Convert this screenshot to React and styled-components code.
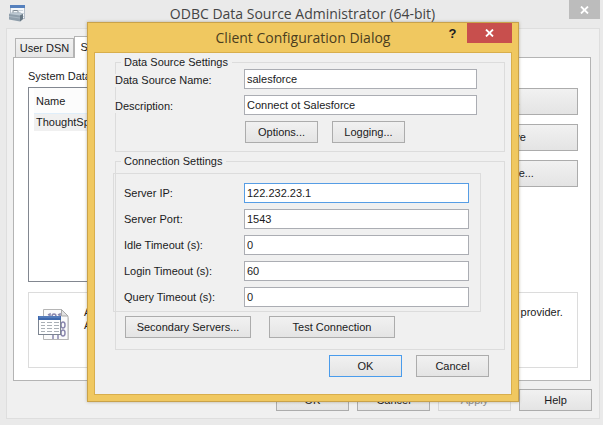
import React from 'react';
import styled, { createGlobalStyle } from 'styled-components';

const GlobalStyle = createGlobalStyle`
  *, *::before, *::after { box-sizing: border-box; }
  body { margin: 0; background: #eaeaea; }
  body, button, input, table {
    font: 11px/13px "Liberation Sans", Arial, sans-serif;
    color: #1a1a22;
  }
`;

const Desktop = styled.div`
  position: relative;
  min-height: 100vh;
  background: #eaeaea;
  overflow: hidden;
`;

const AdminWindow = styled.main`
  padding: 0 3px 6px 6px;
`;

const AdminTitleBar = styled.header`
  display: grid;
  grid-template-columns: 32px 1fr 32px;
  align-items: start;
  height: 28px;
  padding-left: 3px;

  > svg { margin-top: 5px; }
`;

const Title = styled.h1`
  margin: 0;
  font: 400 14px/20px "Open Sans", "Noto Sans", sans-serif;
  color: ${(p) => (p.$active ? '#4a3d1e' : '#444')};
  text-align: center;
  white-space: nowrap;
`;

const AdminTitle = styled(Title)`
  padding: 4px 4px 0 0;
`;

const CloseButton = styled.button`
  display: flex;
  align-items: center;
  justify-content: center;
  width: ${(p) => (p.$active ? 45 : 31)}px;
  height: ${(p) => (p.$active ? 20 : 19)}px;
  padding: 0;
  border: 0;
  background: ${(p) => (p.$active ? '#c84f4d' : '#bcbcbc')};
  justify-self: end;
`;

const AdminBody = styled.div`
  padding: 7px 8px 7px 6px;
  border: 1px solid #dedede;
  background: #f0f0f0;
`;

const Tabs = styled.div`
  display: flex;
  align-items: flex-end;
  padding-left: 2px;
  height: 21px;
`;

const Tab = styled.button`
  width: ${(p) => (p.$selected ? 76 : 59)}px;
  height: ${(p) => (p.$selected ? 22 : 19)}px;
  margin-bottom: ${(p) => (p.$selected ? -1 : 0)}px;
  padding: 0;
  border: 1px solid #b4b4b4;
  border-bottom: 0;
  background: ${(p) => (p.$selected ? '#fff' : 'linear-gradient(#f1f1f1, #e6e6e6)')};
  white-space: nowrap;
`;

const TabPanel = styled.section`
  padding: 12px 12px 12px 14px;
  border: 1px solid #b4b4b4;
  background: #fff;
`;

const PanelLabel = styled.h2`
  margin: 0 0 4px;
  font: inherit;
`;

const SourceArea = styled.div`
  display: grid;
  grid-template-columns: 1fr 145px;
  gap: 8px;
`;

const SourceList = styled.div`
  height: 195px;
  padding: 0 5px;
  border: 1px solid #828790;
`;

const SourceTable = styled.table`
  width: 100%;
  border-collapse: collapse;

  th, td { padding: 0 2px; font-weight: 400; text-align: left; }
  th { height: 25px; padding-top: 3px; background: #fcfcfc; border-bottom: 1px solid #dfeefa; }
  td { height: 18px; background: #f0f0f0; }
`;

const SourceActions = styled.div`
  display: flex;
  flex-direction: column;
  gap: 9px;
  padding-top: 1px;
`;

const Button = styled.button`
  height: ${(p) => (p.$tall ? 27 : 22)}px;
  width: ${(p) => p.$width || '73px'};
  padding: 0;
  border: 1px solid ${(p) => (p.$default ? '#4a9cec' : '#acacac')};
  background: linear-gradient(#f1f1f1, #e4e4e4);
  white-space: nowrap;

  &:disabled { border-color: #d6d6d6; background: #efefef; color: #8c8c8c; }
`;

const InfoBox = styled.div`
  display: flex;
  gap: 14px;
  height: 76px;
  margin-top: 10px;
  padding: 13px 9px;
  border: 1px solid #dcdcdc;

  svg { flex: none; margin-top: 3px; }
  p { margin: 0; white-space: nowrap; }
`;

const AdminFooter = styled.footer`
  display: flex;
  justify-content: flex-end;
  gap: 8px;
  margin-top: 8px;
  margin-right: -1px;
`;

const Dialog = styled.section`
  position: absolute;
  top: 22px;
  left: 87px;
  right: 84px;
  padding: 0 6px 6px;
  border: 1px solid #c9a24a;
  background: #f0c860;
  box-shadow: 0 0 3px rgba(80, 60, 10, 0.35);
`;

const DialogTitleBar = styled.header`
  display: grid;
  grid-template-columns: 74px 1fr 29px 45px;
  align-items: start;
  height: 29px;
`;

const DialogTitle = styled(Title)`
  padding-top: 5px;
`;

const HelpButton = styled.button`
  height: 20px;
  padding: 0;
  border: 0;
  background: none;
  font-size: 13px;
  font-weight: 700;
`;

const DialogForm = styled.form`
  padding: 3px 6px 17px 20px;
  border: 1px solid #d8ae4c;
  background: #f0f0f0;
`;

const Group = styled.fieldset`
  min-width: 0;
  margin: 0 0 3px;
  padding: 0 0 ${(p) => p.$bottom}px;
  border: 1px solid #dcdcdc;
`;

const Legend = styled.legend`
  margin-left: 5px;
  padding: 0 4px 0 3px;
`;

const Fields = styled.div`
  display: flex;
  flex-direction: column;
  gap: 6px;
  padding-right: 27px;
`;

const InsetFields = styled(Fields)`
  margin: 5px 23px 0 -3px;
  padding: 9px 11px 4px 10px;
  border: 1px solid #dcdcdc;
`;

const FieldRow = styled.div`
  display: grid;
  grid-template-columns: ${(p) => (p.$inset ? 120 : 128)}px 1fr;
  align-items: center;
`;

const FieldLabel = styled.label`
  white-space: nowrap;
`;

const EdgeLabel = styled(FieldLabel)`
  margin: 2px 0 0 -1px;
  background: #f0f0f0;
`;

const TextBox = styled.input`
  width: 100%;
  min-width: 0;
  height: 20px;
  padding: 0 2px;
  border: 1px solid ${(p) => (p.$focused ? '#569de5' : '#abadb3')};
  border-radius: 0;
  background: #fff;
  outline: none;
`;

const ButtonRow = styled.div`
  display: flex;
  gap: ${(p) => p.$gap}px;
  padding-left: ${(p) => p.$indent}px;
  margin-top: ${(p) => p.$top}px;
`;

const DialogFooter = styled.footer`
  display: flex;
  justify-content: flex-end;
  gap: 14px;
  padding: 2px 16px 0 0;
`;

function Cross() {
  return (
    <svg width="9" height="8" viewBox="0 0 9 8" aria-hidden="true">
      <path d="M1 .5 8 7.500M8 .5 1 7.500" stroke="#fff" strokeWidth="1.8" fill="none" />
    </svg>
  );
}

function ToolboxIcon() {
  return (
    <svg width="17" height="17" viewBox="0 0 17 17" aria-hidden="true">
      <rect x="1.500" y=".5" width="14" height="13" fill="#f4f7fa" stroke="#b4bdc8" />
      <rect x="1" y="0" width="15" height="3" fill="#5580bd" />
      <path d="M3 5.500h11M12 8.500h3M13 11.500h2" stroke="#cdd5dd" />
      <path d="M4 8V6.500Q4 5.500 5 5.500h3q1 0 1 1V8" fill="none" stroke="#7c8790" />
      <path d="M0 9 3 7.500h8l3 1.500v5l-3 2.500L0 14.500z" fill="#8f9eab" />
      <path d="M0 9 3 7.500h8l3 1.500-3 1.500z" fill="#bac6d0" />
      <path d="M11 10.500 14 9v5l-3 2.500z" fill="#687885" />
      <path d="M0 11.500 11 13" fill="none" stroke="#a9b6c1" />
    </svg>
  );
}

function DataSourceIcon() {
  return (
    <svg width="32" height="32" viewBox="0 0 32 32" aria-hidden="true">
      <path d="M7 2h17l7 7v22H7z" fill="#d0d0d0" />
      <path d="M5.500.5h18l6.500 6.500v23.500H5.500z" fill="#fbfbfb" stroke="#b5b5b5" />
      <path d="M23.500.5V7H30z" fill="#e2e2e2" stroke="#a9a9a9" />
      <g fill="none" stroke="#8b88ae" strokeWidth="1.5">
        <path d="M10 6l2-1v5M20 6l2-1v5M13 25l2-1v6M18 25l2-1v6" />
        <ellipse cx="16" cy="7.500" rx="2" ry="2.500" />
        <ellipse cx="25" cy="16" rx="2" ry="3" />
        <ellipse cx="25" cy="24" rx="2" ry="3" />
      </g>
      <rect x=".5" y="7.500" width="22" height="18" fill="#fff" stroke="#7d8591" />
      <rect x="0" y="7" width="23" height="4" fill="#3e68ad" />
      <path d="M1 8h21" stroke="#6d91ca" />
      <path d="M3 13.500h4M9 13.500h5M16 13.500h5M3 16.500h4M9 16.500h5M16 16.500h5M3 19.500h4M9 19.500h5M16 19.500h5M3 22.500h4M9 22.500h5M16 22.500h5" stroke="#aab0b6" />
    </svg>
  );
}

const connectionFields = [
  { id: 'server-ip', label: 'Server IP:', value: '122.232.23.1', focused: true },
  { id: 'server-port', label: 'Server Port:', value: '1543' },
  { id: 'idle-timeout', label: 'Idle Timeout (s):', value: '0' },
  { id: 'login-timeout', label: 'Login Timeout (s):', value: '60' },
  { id: 'query-timeout', label: 'Query Timeout (s):', value: '0' },
];

function Administrator() {
  return (
    <AdminWindow>
      <AdminTitleBar>
        <ToolboxIcon />
        <AdminTitle>ODBC Data Source Administrator (64-bit)</AdminTitle>
        <CloseButton type="button" aria-label="Close administrator"><Cross /></CloseButton>
      </AdminTitleBar>
      <AdminBody>
        <Tabs role="tablist">
          <Tab type="button" role="tab" aria-selected="false">User DSN</Tab>
          <Tab type="button" role="tab" aria-selected="true" $selected>System DSN</Tab>
        </Tabs>
        <TabPanel role="tabpanel">
          <PanelLabel>System Data Sources:</PanelLabel>
          <SourceArea>
            <SourceList>
              <SourceTable>
                <thead><tr><th>Name</th></tr></thead>
                <tbody><tr><td>ThoughtSpot</td></tr></tbody>
              </SourceTable>
            </SourceList>
            <SourceActions>
              <Button type="button" $tall $width="100%">Add...</Button>
              <Button type="button" $tall $width="100%">Remove</Button>
              <Button type="button" $tall $width="100%">Configure...</Button>
            </SourceActions>
          </SourceArea>
          <InfoBox>
            <DataSourceIcon />
            <p>
              An ODBC System data source stores information on how to connect to the indicated data provider.
              <br />
              A System data source is visible to all users.
            </p>
          </InfoBox>
        </TabPanel>
        <AdminFooter>
          <Button type="button">OK</Button>
          <Button type="button">Cancel</Button>
          <Button type="button" disabled>Apply</Button>
          <Button type="button">Help</Button>
        </AdminFooter>
      </AdminBody>
    </AdminWindow>
  );
}

function ClientDialog() {
  return (
    <Dialog role="dialog" aria-labelledby="dialog-title">
      <DialogTitleBar>
        <span />
        <DialogTitle as="h2" id="dialog-title" $active>Client Configuration Dialog</DialogTitle>
        <HelpButton type="button" aria-label="Help">?</HelpButton>
        <CloseButton type="button" aria-label="Close dialog" $active><Cross /></CloseButton>
      </DialogTitleBar>
      <DialogForm onSubmit={(e) => e.preventDefault()}>
        <Group $bottom={8}>
          <Legend>Data Source Settings</Legend>
          <Fields>
            <FieldRow>
              <EdgeLabel htmlFor="source-name">Data Source Name:</EdgeLabel>
              <TextBox id="source-name" defaultValue="salesforce" />
            </FieldRow>
            <FieldRow>
              <EdgeLabel htmlFor="description">Description:</EdgeLabel>
              <TextBox id="description" defaultValue="Connect ot Salesforce" />
            </FieldRow>
          </Fields>
          <ButtonRow $gap={14} $indent={129} $top={6}>
            <Button type="button">Options...</Button>
            <Button type="button">Logging...</Button>
          </ButtonRow>
        </Group>
        <Group $bottom={11}>
          <Legend>Connection Settings</Legend>
          <InsetFields>
            {connectionFields.map((f) => (
              <FieldRow key={f.id} $inset>
                <FieldLabel htmlFor={f.id}>{f.label}</FieldLabel>
                <TextBox id={f.id} defaultValue={f.value} $focused={f.focused} />
              </FieldRow>
            ))}
          </InsetFields>
          <ButtonRow $gap={18} $indent={9} $top={4}>
            <Button type="button" $width="126px">Secondary Servers...</Button>
            <Button type="button" $width="126px">Test Connection</Button>
          </ButtonRow>
        </Group>
        <DialogFooter>
          <Button type="submit" $default>OK</Button>
          <Button type="button">Cancel</Button>
        </DialogFooter>
      </DialogForm>
    </Dialog>
  );
}

export default function App() {
  return (
    <Desktop>
      <GlobalStyle />
      <Administrator />
      <ClientDialog />
    </Desktop>
  );
}
